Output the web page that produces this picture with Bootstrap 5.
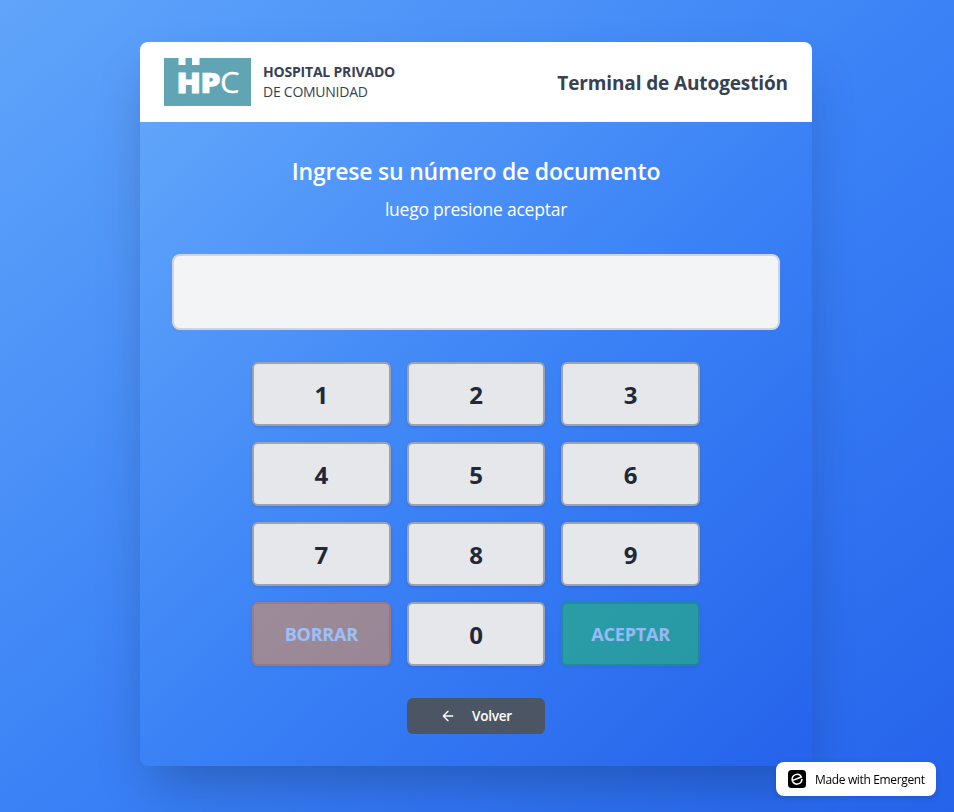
<!DOCTYPE html>
<html lang="es">
<head>
<meta charset="utf-8">
<meta name="viewport" content="width=device-width, initial-scale=1">
<title>Terminal de Autogestión</title>
<link href="https://cdn.jsdelivr.net/npm/bootstrap@5.3.0/dist/css/bootstrap.min.css" rel="stylesheet">
<style>
  :root { --blue-grad: linear-gradient(to bottom right, #60a5fa, #3b82f6, #2563eb); }
  body { font-family: "Segoe UI", "Open Sans", "Noto Sans", sans-serif; height: 812px; overflow: hidden; background: var(--blue-grad); }
  .kiosk-page { padding: 42px 2px 0 0; }
  .kiosk { width: 672px; border-radius: 8px; box-shadow: 0 25px 50px -12px rgba(0,0,0,.25); }
  .kiosk-head { height: 80px; color: #374151; }
  .brand-text { font-size: 14px; line-height: 20px; }
  .brand-name { letter-spacing: -.2px; }
  .brand-sub { letter-spacing: -.25px; }
  .head-title { font-size: 19px; line-height: 28px; letter-spacing: -.12px; padding-top: 2px; }
  .kiosk-body { background: var(--blue-grad); padding: 32px; }
  .prompt { font-size: 23px; line-height: 32px; letter-spacing: -.22px; padding-top: 1px; margin-bottom: 8px; }
  .hint { font-size: 17.5px; line-height: 28px; letter-spacing: -.24px; margin-bottom: 31px; }
  .doc-input { height: 76px; background: #f3f4f6; border: 2px solid #d1d5db; border-radius: 8px; margin-bottom: 32px; }
  .keypad { width: 448px; display: grid; grid-template-columns: repeat(3, 1fr); gap: 16px; }
  .key { height: 64px; padding: 1px 0 0; border: 2px solid #9ca3af; border-radius: 6px; background: #e5e7eb; color: #1f2937; font-size: 24px; line-height: 32px; box-shadow: 0 1px 3px rgba(0,0,0,.1), 0 1px 2px -1px rgba(0,0,0,.1); }
  .key-action { font-size: 18px; line-height: 28px; letter-spacing: -.2px; color: #fff; opacity: .5; padding: 0; }
  .key-clear { background: #fb923c; border-color: #f97316; }
  .key-ok { background: #22c55e; border-color: #16a34a; }
  .key-back { grid-column: 2; height: 36px; margin-top: 16px; border: 0; padding: 0; border-radius: 6px; background: #4b5563; color: #fff; font-size: 13.5px; line-height: 20px; letter-spacing: -.2px; gap: 16px; }
  .made { right: 18px; bottom: 16px; width: 160px; height: 34px; border-radius: 8px; padding: 1px 0 0 11px; gap: 8px; color: #000; font-size: 12px; letter-spacing: -.35px; box-shadow: 0 2px 6px rgba(0,0,0,.15); }
</style>
<script src="https://cdn.jsdelivr.net/npm/bootstrap@5.3.0/dist/js/bootstrap.bundle.min.js"></script>
</head>
<body>
<main class="kiosk-page d-flex justify-content-center">
  <section class="kiosk overflow-hidden">
    <header class="kiosk-head bg-white d-flex align-items-center justify-content-between px-4">
      <div class="d-flex align-items-center">
        <svg width="87" height="48" viewBox="0 0 87 48" role="img" aria-label="HPC">
          <rect width="87" height="48" fill="#61a5b4"/>
          <path d="M14.500 0h7v7h-7zM28 0h7.500v7h-7.500z" fill="#fff"/>
          <g fill="#fff" font-family="Open Sans, sans-serif" font-size="29">
            <text x="12.500" y="35" font-weight="800" stroke="#fff" stroke-width=".8" textLength="24.500" lengthAdjust="spacingAndGlyphs">H</text>
            <text x="36.300" y="35" font-weight="800" stroke="#fff" stroke-width=".5" textLength="20.500" lengthAdjust="spacingAndGlyphs">P</text>
            <text x="56" y="35" font-weight="400" stroke="#fff" stroke-width=".3" textLength="19.500" lengthAdjust="spacingAndGlyphs">C</text>
          </g>
        </svg>
        <div class="brand-text ms-2 ps-1">
          <div class="brand-name fw-bold">HOSPITAL PRIVADO</div>
          <div class="brand-sub">DE COMUNIDAD</div>
        </div>
      </div>
      <h1 class="head-title fw-bold mb-0">Terminal de Autogestión</h1>
    </header>
    <div class="kiosk-body">
      <div class="text-center text-white">
        <h2 class="prompt fw-semibold">Ingrese su número de documento</h2>
        <p class="hint">luego presione aceptar</p>
      </div>
      <div class="doc-input"></div>
      <div class="keypad mx-auto">
        <button class="key fw-bold">1</button><button class="key fw-bold">2</button><button class="key fw-bold">3</button>
        <button class="key fw-bold">4</button><button class="key fw-bold">5</button><button class="key fw-bold">6</button>
        <button class="key fw-bold">7</button><button class="key fw-bold">8</button><button class="key fw-bold">9</button>
        <button class="key key-action key-clear fw-bold">BORRAR</button><button class="key fw-bold">0</button><button class="key key-action key-ok fw-bold">ACEPTAR</button>
        <button class="key-back fw-semibold d-flex align-items-center justify-content-center">
          <svg width="16" height="16" viewBox="0 0 24 24" fill="none" stroke="currentColor" stroke-width="2" stroke-linecap="round" stroke-linejoin="round"><path d="m12 19-7-7 7-7M19 12H5"/></svg>
          <span>Volver</span>
        </button>
      </div>
    </div>
  </section>
</main>
<a class="made position-fixed bg-white d-flex align-items-center text-decoration-none" href="#">
  <svg width="20" height="20" viewBox="0 0 20 20"><rect x="1" y="0" width="18" height="18" rx="3.500" fill="#000"/><path d="M5.200 10.600 14.300 7C13.200 4.700 10.800 3.700 8.500 4.600C6 5.600 4.800 8 5.200 10.600M15 9.400C14.600 12 12.600 13.900 10.300 14.100C8.300 14.300 6.700 13.300 5.900 12" fill="none" stroke="#fff" stroke-width="1.500" stroke-linecap="round"/></svg>
  <span>Made with Emergent</span>
</a>
</body>
</html>
